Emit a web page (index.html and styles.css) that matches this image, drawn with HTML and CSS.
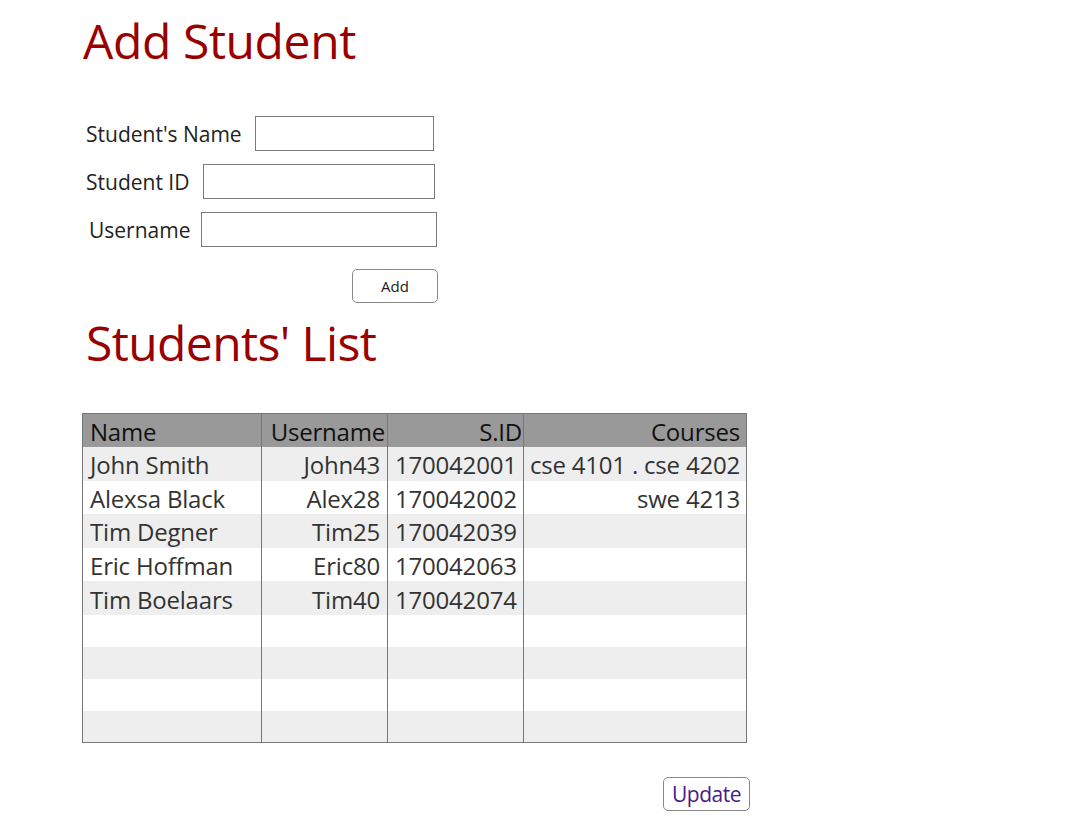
FILE: index.html
```html
<!DOCTYPE html>
<html>
<head>
<meta charset="utf-8">
<link rel="stylesheet" href="styles.css">
</head>
<body>
<div class="page">
  <h1 class="title title-add">Add Student</h1>
  <form class="form">
    <div class="row row-name"><label>Student's Name</label><input class="inp inp-name" type="text"></div>
    <div class="row row-id"><label>Student ID</label><input class="inp inp-id" type="text"></div>
    <div class="row row-user"><label>Username</label><input class="inp inp-user" type="text"></div>
    <div class="actions"><button type="button" class="btn-add">Add</button></div>
  </form>
  <h1 class="title title-list">Students' List</h1>
  <table class="grid">
    <colgroup><col class="c1"><col class="c2"><col class="c3"><col class="c4"></colgroup>
    <thead>
      <tr><th class="l">Name</th><th>Username</th><th>S.ID</th><th>Courses</th></tr>
    </thead>
    <tbody>
      <tr><td class="l">John Smith</td><td>John43</td><td>170042001</td><td>cse 4101 . cse 4202</td></tr>
      <tr><td class="l">Alexsa Black</td><td>Alex28</td><td>170042002</td><td>swe 4213</td></tr>
      <tr><td class="l">Tim Degner</td><td>Tim25</td><td>170042039</td><td></td></tr>
      <tr><td class="l">Eric Hoffman</td><td>Eric80</td><td>170042063</td><td></td></tr>
      <tr><td class="l">Tim Boelaars</td><td>Tim40</td><td>170042074</td><td></td></tr>
      <tr class="empty"><td></td><td></td><td></td><td></td></tr>
      <tr class="empty"><td></td><td></td><td></td><td></td></tr>
      <tr class="empty"><td></td><td></td><td></td><td></td></tr>
      <tr class="empty"><td></td><td></td><td></td><td></td></tr>
    </tbody>
  </table>
  <div class="update-row"><button type="button" class="btn-update">Update</button></div>
</div>
</body>
</html>
```
FILE: styles.css
```css
* { box-sizing: border-box; }
body {
  margin: 0;
  background: #fff;
  font-family: "Open Sans", "Noto Sans", sans-serif;
  color: #222;
}
.page {
  padding-left: 82px;
  width: 760px;
}
.title {
  margin: 0;
  font-weight: 400;
  color: #990000;
  font-size: 48px;
  letter-spacing: -0.4px;
  line-height: 1;
}
.title-add { padding-top: 17px; padding-left: 1px; }
.title-list { padding-left: 4px; margin-top: 16px; letter-spacing: -0.6px; }
.form {
  margin-top: 51px;
  width: 356px;
  display: flex;
  flex-direction: column;
  gap: 13px;
}
.row {
  display: flex;
  align-items: center;
  gap: 13px;
  font-size: 21px;
  color: #222;
}
.row-name { padding-left: 4px; }
.row-id { padding-left: 4px; gap: 14px; }
.row-user { padding-left: 7px; gap: 11px; }
.inp {
  height: 35px;
  border: 1px solid #7a7a7a;
  background: #fff;
  margin: 0;
}
.inp-name { width: 179px; }
.inp-id { width: 232px; }
.inp-user { width: 236px; }
.actions {
  display: flex;
  justify-content: flex-end;
  margin-top: 9px;
}
.btn-add {
  width: 86px;
  height: 34px;
  border: 1px solid #8a8a8a;
  border-radius: 5px;
  background: #fff;
  font-family: inherit;
  font-size: 15px;
  color: #222;
}
.grid {
  margin-top: 46px;
  border-collapse: collapse;
  width: 664px;
  table-layout: fixed;
  border: 1px solid #777;
  font-size: 24px;
  color: #333;
  letter-spacing: -0.2px;
}
.c1 { width: 179px; }
.c2 { width: 126px; }
.c3 { width: 136px; }
.c4 { width: 223px; }
.grid th, .grid td {
  border-left: 1px solid #777;
  border-right: 1px solid #777;
  padding: 2px 6px 0 7px;
  text-align: right;
  white-space: nowrap;
  overflow: hidden;
  height: 33.6px;
  line-height: 31px;
}
.grid th {
  background: #999;
  font-weight: 400;
  color: #111;
  height: 33px;
}
.grid th.l, .grid td.l { text-align: left; }
.grid th:nth-child(2) { padding-right: 2px; }
.grid td:nth-child(2) { padding-right: 7px; }
.grid td:nth-child(3) { padding-right: 8px; }
.grid th:nth-child(3) { padding-right: 1px; }
.grid td:nth-child(4) { padding-right: 6px; padding-left: 2px; }
.grid tbody tr:nth-child(odd) td { background: #eee; }
.grid tr.empty td { height: 32px; }
.update-row {
  width: 668px;
  display: flex;
  justify-content: flex-end;
  margin-top: 34px;
}
.btn-update {
  width: 87px;
  height: 34px;
  border: 1px solid #888;
  border-radius: 5px;
  background: #fff;
  font-family: inherit;
  font-size: 21px;
  color: #4b1a8a;
  padding: 0;
  letter-spacing: -0.5px;
}
```
